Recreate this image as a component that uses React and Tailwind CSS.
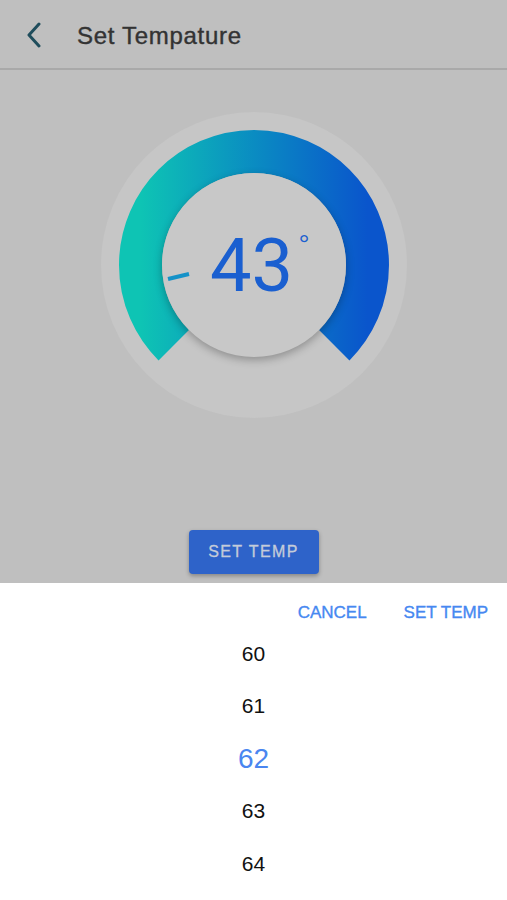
import React from "react";

const Dial = ({ value }) => {
  // arc: radius 113.5, 43px thick, from lower-left round the top to lower-right
  const c = 153;
  const r = 113.5;
  const d = r * Math.SQRT1_2;
  const arc = `M ${c - d} ${c + d} A ${r} ${r} 0 1 1 ${c + d} ${c + d}`;

  return (
    <div className="relative w-[306px] h-[306px]">
      <svg width="306" height="306" viewBox="0 0 306 306">
        <defs>
          <linearGradient id="dialGrad" x1="0" y1="0" x2="1" y2="0">
            <stop offset="0%" stopColor="#0ec4b4" />
            <stop offset="50%" stopColor="#0a8cc2" />
            <stop offset="100%" stopColor="#0a55cc" />
          </linearGradient>
        </defs>
        <circle cx={c} cy={c} r="153" fill="#c6c6c6" />
        <path d={arc} fill="none" stroke="url(#dialGrad)" strokeWidth="43" />
      </svg>
      <div className="absolute left-[61px] top-[61px] w-[184px] h-[184px] rounded-full bg-[#c8c8c8] shadow-[0_3px_8px_rgba(0,0,0,0.28)] flex items-center justify-center">
        <svg className="absolute left-0 top-0" width="184" height="184">
          <line x1="6" y1="106" x2="27" y2="101" stroke="#1592c8" strokeWidth="4" />
        </svg>
        <div className="relative font-['Roboto',sans-serif] font-normal text-[74px] leading-none text-[#1a5fd0] -ml-[4px] mt-[1px]">
          {value}
          <span className="absolute -right-[17px] top-[1px] text-[32px] font-light">°</span>
        </div>
      </div>
    </div>
  );
};

const App = () => {
  const options = [60, 61, 62, 63, 64];
  const selected = 62;

  return (
    <div className="w-full h-[900px] flex flex-col bg-[#bfbfbf] font-['Liberation_Sans',sans-serif] overflow-hidden">
      <header className="h-[70px] flex items-center border-b-2 border-[#a9a9a9] shrink-0">
        <button className="ml-[22px] mt-[2px] w-[24px] h-[30px] flex items-center justify-center">
          <svg width="18" height="26" viewBox="0 0 18 26">
            <polyline
              points="14,2 4,13 14,24"
              fill="none"
              stroke="#1f4d5c"
              strokeWidth="3"
              strokeLinecap="round"
              strokeLinejoin="round"
            />
          </svg>
        </button>
        <h1 className="ml-[31px] mt-[3px] text-[24px] tracking-[0.7px] text-[#333] [-webkit-text-stroke:0.4px_#333]">
          Set Tempature
        </h1>
      </header>

      <main className="flex-1 flex flex-col items-center">
        <div className="mt-[42px]">
          <Dial value={43} />
        </div>
        <div className="flex-1" />
        <button className="mb-[9px] w-[130px] h-[44px] rounded-[4px] bg-[#2e63c9] shadow-[0_2px_4px_rgba(0,0,0,0.3)] text-[#c4ccd9] text-[16px] tracking-[1.4px] [-webkit-text-stroke:0.3px_#c4ccd9]">
          SET TEMP
        </button>
      </main>

      <section className="h-[317px] bg-white shrink-0">
        <div className="h-[44px] flex items-end justify-end pr-[19px] gap-[37px] text-[17px] text-[#4688f1] [-webkit-text-stroke:0.35px_#4688f1]">
          <button className="pb-[2px]">CANCEL</button>
          <button className="pb-[2px]">SET TEMP</button>
        </div>
        <ul className="flex flex-col">
          {options.map((n) => (
            <li
              key={n}
              className={
                n === selected
                  ? "h-[52.5px] flex items-center justify-center pt-[2px] text-[28px] text-[#4a86f0]"
                  : "h-[52.5px] flex items-center justify-center text-[21px] text-[#111]"
              }
            >
              {n}
            </li>
          ))}
        </ul>
      </section>
    </div>
  );
};

export default App;
